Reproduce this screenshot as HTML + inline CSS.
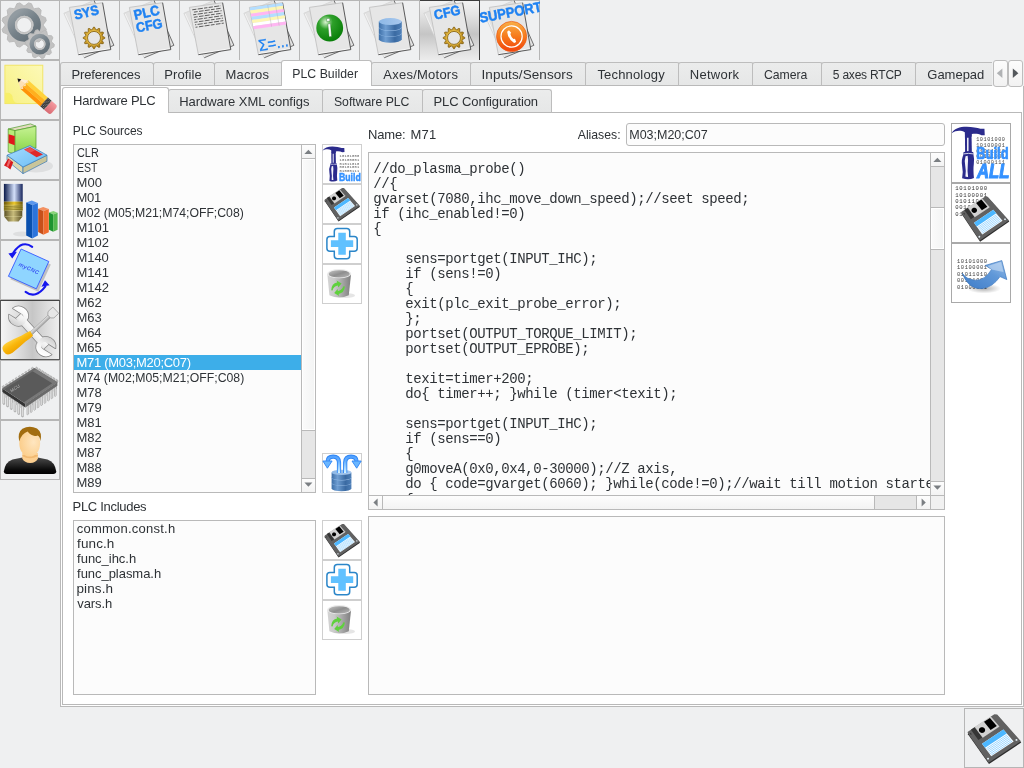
<!DOCTYPE html><html><head><meta charset="utf-8"><title>myCNC</title><style>

html,body{margin:0;padding:0}
body{width:1024px;height:768px;overflow:hidden;background:#eff0f1;position:relative;font-family:"Liberation Sans",sans-serif;color:#2e3236}
div,svg{position:absolute;box-sizing:border-box}
.ic{overflow:hidden}
.t{white-space:pre;font-family:"Liberation Sans",sans-serif;color:#2e3236}
.m{font-family:"Liberation Mono",monospace}
.tb{top:0;width:60px;height:60px;border-top:1px solid #b6b6b6;border-right:1px solid #b6b6b6}
.sb{left:0;width:60px;height:60px;border:1px solid #b6b6b6}
.sel-v{background:linear-gradient(to bottom,#f3f3f3 0%,#e2e2e2 25%,#c5c5c5 56%,#dcdcdc 80%,#ececec 100%);border-top-color:#3c3c3c;border-right-color:#3c3c3c}
.sel-h{background:linear-gradient(to right,#f5f5f5 0%,#e2e2e2 25%,#c6c6c6 54%,#dddddd 80%,#eeeeee 100%);border-color:#5a5a5a;border-top-color:#444}
.tab{background:linear-gradient(#ebecec,#e6e7e7);border:1px solid #bdbdbd;border-bottom:none;border-radius:3px 3px 0 0}
.tabsel{background:#fff;border:1px solid #bdbdbd;border-bottom:none;border-radius:3px 3px 0 0}
.pane{background:#fff;border:1px solid #b9b9b9}
.box{background:#fcfcfc;border:1px solid #b9b9b9}
.btn40{width:40px;height:40px;background:#fff;border:1px solid #cfcfcf}
.btn60{width:60px;height:60px;background:#fff;border:1px solid #a9a9a9}
.sbbtn{background:linear-gradient(#fdfdfd,#f3f3f3)}

</style></head><body><div id="root" style="left:0;top:0;width:1024px;height:768px;will-change:transform">
<svg width="0" height="0" style="position:absolute">
<defs>
 <linearGradient id="goldg" x1="0" y1="0" x2="1" y2="1"><stop offset="0" stop-color="#e0b23a"/><stop offset="1" stop-color="#ae7e16"/></linearGradient>
 <clipPath id="docclip"><polygon points="9.4,7.4 42.6,2.7 50.8,49.6 18.4,54.7"/></clipPath>
 <linearGradient id="trashg" x1="0" y1="0" x2="1" y2="0"><stop offset="0" stop-color="#d4d4d4"/><stop offset="0.3" stop-color="#cacaca"/><stop offset="1" stop-color="#7e7e7e"/></linearGradient>
 <linearGradient id="trashin" x1="0" y1="0" x2="1" y2="1"><stop offset="0" stop-color="#c4c4c4"/><stop offset="0.5" stop-color="#8e8e8e"/><stop offset="1" stop-color="#b8b8b8"/></linearGradient>
 <linearGradient id="dbside" x1="0" y1="0" x2="1" y2="0"><stop offset="0" stop-color="#3d6fa8"/><stop offset="0.3" stop-color="#6f9ed2"/><stop offset="0.7" stop-color="#3a6aa2"/><stop offset="1" stop-color="#4f80b8"/></linearGradient>
 <linearGradient id="dbtop" x1="0" y1="0" x2="1" y2="0"><stop offset="0" stop-color="#8db8e6"/><stop offset="1" stop-color="#a8c8ee"/></linearGradient>
 <linearGradient id="arrg" gradientUnits="userSpaceOnUse" x1="0" y1="2" x2="0" y2="20"><stop offset="0" stop-color="#4a9cff"/><stop offset="0.35" stop-color="#66b0ff"/><stop offset="1" stop-color="#d6f4ff"/></linearGradient>
 <linearGradient id="gearring" x1="0.15" y1="0.1" x2="0.85" y2="0.9"><stop offset="0" stop-color="#929ba1"/><stop offset="0.5" stop-color="#76828a"/><stop offset="1" stop-color="#66727a"/></linearGradient>
 <linearGradient id="noteg" x1="0" y1="1" x2="1" y2="0"><stop offset="0" stop-color="#f8f186"/><stop offset="0.5" stop-color="#faf59c"/><stop offset="1" stop-color="#fcf9b8"/></linearGradient>
 <linearGradient id="eraserg" x1="0" y1="0" x2="0" y2="1"><stop offset="0" stop-color="#f49aa0"/><stop offset="1" stop-color="#d86a72"/></linearGradient>
 <linearGradient id="greenbk" x1="0" y1="0" x2="0" y2="1"><stop offset="0" stop-color="#c6f294"/><stop offset="0.5" stop-color="#a6e46a"/><stop offset="1" stop-color="#86d048"/></linearGradient>
 <linearGradient id="bluebk" x1="0" y1="0" x2="1" y2="1"><stop offset="0" stop-color="#a8dcff"/><stop offset="1" stop-color="#68bcf4"/></linearGradient>
 <linearGradient id="toolblue" x1="0" y1="0" x2="1" y2="0"><stop offset="0" stop-color="#081848"/><stop offset="0.55" stop-color="#d4e0fa"/><stop offset="1" stop-color="#16245c"/></linearGradient>
 <linearGradient id="toolgold" x1="0" y1="0" x2="1" y2="0"><stop offset="0" stop-color="#6a5608"/><stop offset="0.55" stop-color="#ecc82c"/><stop offset="1" stop-color="#6a5608"/></linearGradient>
 <linearGradient id="toolgold2" x1="0" y1="0" x2="1" y2="0"><stop offset="0" stop-color="#8a7a20"/><stop offset="0.5" stop-color="#e8d468"/><stop offset="1" stop-color="#8a7a20"/></linearGradient>
 <linearGradient id="toolgold3" x1="0" y1="0" x2="1" y2="0"><stop offset="0" stop-color="#5c5226"/><stop offset="0.5" stop-color="#c8bc7c"/><stop offset="1" stop-color="#5c5226"/></linearGradient>
 <linearGradient id="wrenchg" gradientUnits="userSpaceOnUse" x1="0" y1="-9" x2="0" y2="9"><stop offset="0" stop-color="#ffffff"/><stop offset="0.5" stop-color="#f2f2f2"/><stop offset="1" stop-color="#d2d2d2"/></linearGradient>
 <linearGradient id="shaftg" x1="0" y1="0" x2="0" y2="1"><stop offset="0" stop-color="#e8e8e8"/><stop offset="1" stop-color="#a0a0a0"/></linearGradient>
 <linearGradient id="handleg" x1="0" y1="0" x2="0" y2="1"><stop offset="0" stop-color="#ffcf3a"/><stop offset="0.5" stop-color="#f9b60a"/><stop offset="1" stop-color="#f0a400"/></linearGradient>
 <linearGradient id="bodyg" x1="0" y1="0" x2="0" y2="1"><stop offset="0" stop-color="#4a4a4a"/><stop offset="0.75" stop-color="#0a0a0a"/><stop offset="1" stop-color="#000"/></linearGradient>
 <radialGradient id="faceg" cx="0.68" cy="0.45" r="0.7"><stop offset="0" stop-color="#ffe6c0"/><stop offset="1" stop-color="#fbcd8a"/></radialGradient>
 <radialGradient id="greeng" cx="0.35" cy="0.28" r="0.75"><stop offset="0" stop-color="#d8f4d0"/><stop offset="0.35" stop-color="#2ea02a"/><stop offset="1" stop-color="#087e08"/></radialGradient>
 <linearGradient id="orangeg" x1="0" y1="0" x2="0" y2="1"><stop offset="0" stop-color="#f8b048"/><stop offset="0.5" stop-color="#f67a1c"/><stop offset="1" stop-color="#f2420c"/></linearGradient>
 <linearGradient id="bigarr" x1="0" y1="1" x2="1" y2="0"><stop offset="0" stop-color="#3e7cc8"/><stop offset="0.6" stop-color="#6098d8"/><stop offset="1" stop-color="#9cc0ea"/></linearGradient>
 <radialGradient id="shadowg" cx="0.5" cy="0.5" r="0.5"><stop offset="0" stop-color="#000" stop-opacity="0.32"/><stop offset="1" stop-color="#000" stop-opacity="0"/></radialGradient>
</defs>
<symbol id="i-gears" viewBox="0 0 60 60">
  <path d="M24.87 5.71 L28.49 2.91 L31.45 3.70 L33.20 7.93 L34.43 8.63 L38.96 8.02 L41.13 10.18 L40.53 14.71 L41.24 15.94 L45.47 17.67 L46.27 20.63 L43.49 24.26 L43.49 25.67 L46.29 29.29 L45.50 32.25 L41.27 34.00 L40.57 35.23 L41.18 39.76 L39.02 41.93 L34.49 41.33 L33.26 42.04 L31.53 46.27 L28.57 47.07 L24.94 44.29 L23.53 44.29 L19.91 47.09 L16.95 46.30 L15.20 42.07 L13.97 41.37 L9.44 41.98 L7.27 39.82 L7.87 35.29 L7.16 34.06 L2.93 32.33 L2.13 29.37 L4.91 25.74 L4.91 24.33 L2.11 20.71 L2.90 17.75 L7.13 16.00 L7.83 14.77 L7.22 10.24 L9.38 8.07 L13.91 8.67 L15.14 7.96 L16.87 3.73 L19.83 2.93 L23.46 5.71Z M16.60 25.00 a7.60 7.60 0 1 0 15.20 0 a7.60 7.60 0 1 0 -15.20 0Z" fill="#c2c2c2" fill-rule="evenodd" stroke="#b8b8b8" stroke-width="0.9" stroke-linejoin="round"/>
  <circle cx="24.2" cy="25" r="13" fill="none" stroke="url(#gearring)" stroke-width="7.4"/>
  <circle cx="24.2" cy="25" r="8.5" fill="none" stroke="#c6c6c6" stroke-width="1.6"/>
  <path d="M51.63 42.07 L54.30 44.37 L54.06 46.72 L50.99 48.44 L50.56 49.41 L51.37 52.84 L49.80 54.60 L46.30 54.19 L45.39 54.72 L44.03 57.97 L41.72 58.47 L39.13 56.08 L38.08 55.98 L35.07 57.81 L32.90 56.85 L32.21 53.40 L31.43 52.70 L27.92 52.41 L26.72 50.36 L28.20 47.16 L27.97 46.13 L25.30 43.83 L25.54 41.48 L28.61 39.76 L29.04 38.79 L28.23 35.36 L29.80 33.60 L33.30 34.01 L34.21 33.48 L35.57 30.23 L37.88 29.73 L40.47 32.12 L41.52 32.22 L44.53 30.39 L46.70 31.35 L47.39 34.80 L48.17 35.50 L51.68 35.79 L52.88 37.84 L51.40 41.04Z" fill="#eff0f1" stroke="#b4b4b4" stroke-width="1.2" opacity="0.0"/>
  <path d="M51.63 42.07 L54.30 44.37 L54.06 46.72 L50.99 48.44 L50.56 49.41 L51.37 52.84 L49.80 54.60 L46.30 54.19 L45.39 54.72 L44.03 57.97 L41.72 58.47 L39.13 56.08 L38.08 55.98 L35.07 57.81 L32.90 56.85 L32.21 53.40 L31.43 52.70 L27.92 52.41 L26.72 50.36 L28.20 47.16 L27.97 46.13 L25.30 43.83 L25.54 41.48 L28.61 39.76 L29.04 38.79 L28.23 35.36 L29.80 33.60 L33.30 34.01 L34.21 33.48 L35.57 30.23 L37.88 29.73 L40.47 32.12 L41.52 32.22 L44.53 30.39 L46.70 31.35 L47.39 34.80 L48.17 35.50 L51.68 35.79 L52.88 37.84 L51.40 41.04Z M35.20 44.10 a4.60 4.60 0 1 0 9.20 0 a4.60 4.60 0 1 0 -9.20 0Z" fill="#c2c2c2" fill-rule="evenodd" stroke="#b8b8b8" stroke-width="0.9" stroke-linejoin="round"/>
  <circle cx="39.8" cy="44.1" r="8.0" fill="none" stroke="url(#gearring)" stroke-width="4.6"/>
  <circle cx="39.8" cy="44.1" r="5.2" fill="none" stroke="#c6c6c6" stroke-width="1.1"/>
</symbol>
<symbol id="i-sys" viewBox="0 0 60 60">
  <polygon points="3.9,13.3 34,0.4 53.9,45.3 24.2,57.8" fill="#e2e2e2"/>
  <polyline points="24.2,57.8 3.9,13.3 34,0.4" fill="none" stroke="#d2d2d2" stroke-width="0.8"/><polyline points="24.6,56.6 5.2,13.9" fill="none" stroke="#f6f6f6" stroke-width="0.8"/>
  <polyline points="34,0.4 53.9,45.3 24.2,57.8" fill="none" stroke="#5a5a5a" stroke-width="0.85"/>
  <polygon points="9.4,7.4 42.6,2.7 50.8,49.6 18.4,54.7" fill="#e6e6e6"/>
  <polyline points="18.9,53.6 49.6,48.8" fill="none" stroke="#fafafa" stroke-width="0.9"/>
  <polyline points="18.4,54.7 9.4,7.4 42.6,2.7" fill="none" stroke="#c2c2c2" stroke-width="0.9"/>
  <polyline points="42.6,2.7 50.8,49.6 18.4,54.7" fill="none" stroke="#4a4a4a" stroke-width="0.9"/>
<text x="0" y="0" transform="translate(15.20 19.80) rotate(-13) scale(1 1.09)" font-family="Liberation Sans, sans-serif" font-weight="bold" font-size="12.6" fill="#1f82f2" stroke="#1f82f2" stroke-width="0.45" >SYS</text>
  <path d="M32.30 29.47 L33.55 27.11 L34.45 27.11 L35.70 29.47 L36.74 29.75 L39.00 28.33 L39.79 28.78 L39.69 31.45 L40.45 32.21 L43.12 32.11 L43.57 32.90 L42.15 35.16 L42.43 36.20 L44.79 37.45 L44.79 38.35 L42.43 39.60 L42.15 40.64 L43.57 42.90 L43.12 43.69 L40.45 43.59 L39.69 44.35 L39.79 47.02 L39.00 47.47 L36.74 46.05 L35.70 46.33 L34.45 48.69 L33.55 48.69 L32.30 46.33 L31.26 46.05 L29.00 47.47 L28.21 47.02 L28.31 44.35 L27.55 43.59 L24.88 43.69 L24.43 42.90 L25.85 40.64 L25.57 39.60 L23.21 38.35 L23.21 37.45 L25.57 36.20 L25.85 35.16 L24.43 32.90 L24.88 32.11 L27.55 32.21 L28.31 31.45 L28.21 28.78 L29.00 28.33 L31.26 29.75Z M27.50 37.90 a6.50 6.50 0 1 0 13.00 0 a6.50 6.50 0 1 0 -13.00 0Z" fill="url(#goldg)" fill-rule="evenodd" stroke="#7e5c0e" stroke-width="0.8" stroke-linejoin="round"/>
  <circle cx="34" cy="37.9" r="7.4" fill="none" stroke="#f0cc58" stroke-width="0.7" opacity="0.8"/>
</symbol>
<symbol id="i-plccfg" viewBox="0 0 60 60">
  <polygon points="3.9,13.3 34,0.4 53.9,45.3 24.2,57.8" fill="#e2e2e2"/>
  <polyline points="24.2,57.8 3.9,13.3 34,0.4" fill="none" stroke="#d2d2d2" stroke-width="0.8"/><polyline points="24.6,56.6 5.2,13.9" fill="none" stroke="#f6f6f6" stroke-width="0.8"/>
  <polyline points="34,0.4 53.9,45.3 24.2,57.8" fill="none" stroke="#5a5a5a" stroke-width="0.85"/>
  <polygon points="9.4,7.4 42.6,2.7 50.8,49.6 18.4,54.7" fill="#e6e6e6"/>
  <polyline points="18.9,53.6 49.6,48.8" fill="none" stroke="#fafafa" stroke-width="0.9"/>
  <polyline points="18.4,54.7 9.4,7.4 42.6,2.7" fill="none" stroke="#c2c2c2" stroke-width="0.9"/>
  <polyline points="42.6,2.7 50.8,49.6 18.4,54.7" fill="none" stroke="#4a4a4a" stroke-width="0.9"/>
<text x="0" y="0" transform="translate(15.10 20.10) rotate(-13) scale(1 1.09)" font-family="Liberation Sans, sans-serif" font-weight="bold" font-size="12.9" fill="#1f82f2" stroke="#1f82f2" stroke-width="0.45" >PLC</text><text x="0" y="0" transform="translate(17.10 32.60) rotate(-11) scale(1 1.09)" font-family="Liberation Sans, sans-serif" font-weight="bold" font-size="12.6" fill="#1f82f2" stroke="#1f82f2" stroke-width="0.45" >CFG</text></symbol>
<symbol id="i-text" viewBox="0 0 60 60">
  <polygon points="3.9,13.3 34,0.4 53.9,45.3 24.2,57.8" fill="#e2e2e2"/>
  <polyline points="24.2,57.8 3.9,13.3 34,0.4" fill="none" stroke="#d2d2d2" stroke-width="0.8"/><polyline points="24.6,56.6 5.2,13.9" fill="none" stroke="#f6f6f6" stroke-width="0.8"/>
  <polyline points="34,0.4 53.9,45.3 24.2,57.8" fill="none" stroke="#5a5a5a" stroke-width="0.85"/>
  <polygon points="9.4,7.4 42.6,2.7 50.8,49.6 18.4,54.7" fill="#e6e6e6"/>
  <polyline points="18.9,53.6 49.6,48.8" fill="none" stroke="#fafafa" stroke-width="0.9"/>
  <polyline points="18.4,54.7 9.4,7.4 42.6,2.7" fill="none" stroke="#c2c2c2" stroke-width="0.9"/>
  <polyline points="42.6,2.7 50.8,49.6 18.4,54.7" fill="none" stroke="#4a4a4a" stroke-width="0.9"/>
<line x1="12.24" y1="9.81" x2="40.75" y2="5.75" stroke="#3a3a3a" stroke-width="0.8" stroke-dasharray="4.2 1.3 5.2 1.2 3.4 1.3" stroke-dashoffset="0"/>
<line x1="12.71" y1="12.31" x2="41.19" y2="8.23" stroke="#3a3a3a" stroke-width="0.8" stroke-dasharray="5 1.2 3.8 1.4 4.6 1.2" stroke-dashoffset="5"/>
<line x1="13.19" y1="14.80" x2="41.63" y2="10.71" stroke="#3a3a3a" stroke-width="0.8" stroke-dasharray="4.2 1.3 5.2 1.2 3.4 1.3" stroke-dashoffset="1"/>
<line x1="13.66" y1="17.30" x2="42.06" y2="13.18" stroke="#3a3a3a" stroke-width="0.8" stroke-dasharray="5 1.2 3.8 1.4 4.6 1.2" stroke-dashoffset="6"/>
<line x1="14.13" y1="19.80" x2="42.50" y2="15.66" stroke="#3a3a3a" stroke-width="0.8" stroke-dasharray="4.2 1.3 5.2 1.2 3.4 1.3" stroke-dashoffset="2"/>
<line x1="14.60" y1="22.29" x2="42.93" y2="18.14" stroke="#3a3a3a" stroke-width="0.8" stroke-dasharray="5 1.2 3.8 1.4 4.6 1.2" stroke-dashoffset="7"/>
<line x1="15.08" y1="24.79" x2="43.37" y2="20.62" stroke="#3a3a3a" stroke-width="0.8" stroke-dasharray="4.2 1.3 5.2 1.2 3.4 1.3" stroke-dashoffset="3"/>
<line x1="15.55" y1="27.28" x2="43.81" y2="23.10" stroke="#3a3a3a" stroke-width="0.8" stroke-dasharray="5 1.2 3.8 1.4 4.6 1.2" stroke-dashoffset="8"/></symbol>
<symbol id="i-sum" viewBox="0 0 60 60">
  <polygon points="3.9,13.3 34,0.4 53.9,45.3 24.2,57.8" fill="#e2e2e2"/>
  <polyline points="24.2,57.8 3.9,13.3 34,0.4" fill="none" stroke="#d2d2d2" stroke-width="0.8"/><polyline points="24.6,56.6 5.2,13.9" fill="none" stroke="#f6f6f6" stroke-width="0.8"/>
  <polyline points="34,0.4 53.9,45.3 24.2,57.8" fill="none" stroke="#5a5a5a" stroke-width="0.85"/>
  <polygon points="9.4,7.4 42.6,2.7 50.8,49.6 18.4,54.7" fill="#e6e6e6"/>
  <polyline points="18.9,53.6 49.6,48.8" fill="none" stroke="#fafafa" stroke-width="0.9"/>
  <polyline points="18.4,54.7 9.4,7.4 42.6,2.7" fill="none" stroke="#c2c2c2" stroke-width="0.9"/>
  <polyline points="42.6,2.7 50.8,49.6 18.4,54.7" fill="none" stroke="#4a4a4a" stroke-width="0.9"/>
<g clip-path="url(#docclip)">
<polygon points="9.40,7.40 42.60,2.70 43.15,5.82 10.00,10.55" fill="#b4deff"/>
<polygon points="10.00,10.55 43.15,5.82 43.69,8.94 10.60,13.69" fill="#fdf6b4"/>
<polygon points="10.60,13.69 43.69,8.94 44.24,12.06 11.20,16.84" fill="#ffb6f2"/>
<polygon points="11.20,16.84 44.24,12.06 44.78,15.18 11.79,19.98" fill="#b4deff"/>
<polygon points="11.79,19.98 44.78,15.18 45.33,18.29 12.39,23.13" fill="#fdf6b4"/>
<polygon points="12.39,23.13 45.33,18.29 45.87,21.41 12.99,26.27" fill="#ffffff"/>
<polygon points="12.99,26.27 45.87,21.41 46.42,24.53 13.59,29.42" fill="#ffb6f2"/>
<line x1="27.66" y1="4.81" x2="31.64" y2="26.73" stroke="#a8a8a8" stroke-width="0.5" opacity="0.7"/>
<line x1="35.30" y1="3.73" x2="39.20" y2="25.61" stroke="#a8a8a8" stroke-width="0.5" opacity="0.7"/>
</g><text x="0" y="0" transform="translate(19.40 51.30) rotate(-10) scale(1 1.09)" font-family="Liberation Sans, sans-serif" font-weight="normal" font-size="14.8" fill="#1f82f2" stroke="#1f82f2" stroke-width="0.25" >&#931;=...</text></symbol>
<symbol id="i-info" viewBox="0 0 60 60">
  <polygon points="3.9,13.3 34,0.4 53.9,45.3 24.2,57.8" fill="#e2e2e2"/>
  <polyline points="24.2,57.8 3.9,13.3 34,0.4" fill="none" stroke="#d2d2d2" stroke-width="0.8"/><polyline points="24.6,56.6 5.2,13.9" fill="none" stroke="#f6f6f6" stroke-width="0.8"/>
  <polyline points="34,0.4 53.9,45.3 24.2,57.8" fill="none" stroke="#5a5a5a" stroke-width="0.85"/>
  <polygon points="9.4,7.4 42.6,2.7 50.8,49.6 18.4,54.7" fill="#e6e6e6"/>
  <polyline points="18.9,53.6 49.6,48.8" fill="none" stroke="#fafafa" stroke-width="0.9"/>
  <polyline points="18.4,54.7 9.4,7.4 42.6,2.7" fill="none" stroke="#c2c2c2" stroke-width="0.9"/>
  <polyline points="42.6,2.7 50.8,49.6 18.4,54.7" fill="none" stroke="#4a4a4a" stroke-width="0.9"/>

  <circle cx="29.7" cy="28" r="13.4" fill="url(#greeng)"/>
  <rect x="26.6" y="18.6" width="3.2" height="2.7" fill="#fff" stroke="#0a5a0a" stroke-width="0.3" transform="rotate(-8 28 20)"/>
  <path d="M27.9 24 L30.4 23.6 L31.6 36.4 L29.1 36.7Z" fill="#fff" stroke="#0a5a0a" stroke-width="0.3"/>
</symbol>
<symbol id="i-db" viewBox="0 0 60 60">
  <polygon points="3.9,13.3 34,0.4 53.9,45.3 24.2,57.8" fill="#e2e2e2"/>
  <polyline points="24.2,57.8 3.9,13.3 34,0.4" fill="none" stroke="#d2d2d2" stroke-width="0.8"/><polyline points="24.6,56.6 5.2,13.9" fill="none" stroke="#f6f6f6" stroke-width="0.8"/>
  <polyline points="34,0.4 53.9,45.3 24.2,57.8" fill="none" stroke="#5a5a5a" stroke-width="0.85"/>
  <polygon points="9.4,7.4 42.6,2.7 50.8,49.6 18.4,54.7" fill="#e6e6e6"/>
  <polyline points="18.9,53.6 49.6,48.8" fill="none" stroke="#fafafa" stroke-width="0.9"/>
  <polyline points="18.4,54.7 9.4,7.4 42.6,2.7" fill="none" stroke="#c2c2c2" stroke-width="0.9"/>
  <polyline points="42.6,2.7 50.8,49.6 18.4,54.7" fill="none" stroke="#4a4a4a" stroke-width="0.9"/>
<path d="M18.8 33.400000000000006 V39.300000000000004 A11.499999999999998 3.5 0 0 0 41.8 39.300000000000004 V33.400000000000006 Z" fill="url(#dbside)"/><ellipse cx="30.299999999999997" cy="33.400000000000006" rx="11.499999999999998" ry="3.5" fill="url(#dbtop)"/>
<path d="M18.8 27.5 V33.0 A11.499999999999998 3.5 0 0 0 41.8 33.0 V27.5 Z" fill="url(#dbside)"/><ellipse cx="30.299999999999997" cy="27.5" rx="11.499999999999998" ry="3.5" fill="url(#dbtop)"/>
<path d="M18.8 21.6 V27.1 A11.499999999999998 3.5 0 0 0 41.8 27.1 V21.6 Z" fill="url(#dbside)"/><ellipse cx="30.299999999999997" cy="21.6" rx="11.499999999999998" ry="3.5" fill="url(#dbtop)"/></symbol>
<symbol id="i-cfg" viewBox="0 0 60 60">
  <polygon points="3.9,13.3 34,0.4 53.9,45.3 24.2,57.8" fill="#e2e2e2"/>
  <polyline points="24.2,57.8 3.9,13.3 34,0.4" fill="none" stroke="#d2d2d2" stroke-width="0.8"/><polyline points="24.6,56.6 5.2,13.9" fill="none" stroke="#f6f6f6" stroke-width="0.8"/>
  <polyline points="34,0.4 53.9,45.3 24.2,57.8" fill="none" stroke="#5a5a5a" stroke-width="0.85"/>
  <polygon points="9.4,7.4 42.6,2.7 50.8,49.6 18.4,54.7" fill="#e6e6e6"/>
  <polyline points="18.9,53.6 49.6,48.8" fill="none" stroke="#fafafa" stroke-width="0.9"/>
  <polyline points="18.4,54.7 9.4,7.4 42.6,2.7" fill="none" stroke="#c2c2c2" stroke-width="0.9"/>
  <polyline points="42.6,2.7 50.8,49.6 18.4,54.7" fill="none" stroke="#4a4a4a" stroke-width="0.9"/>
<text x="0" y="0" transform="translate(15.10 19.80) rotate(-12) scale(1 1.09)" font-family="Liberation Sans, sans-serif" font-weight="bold" font-size="12.6" fill="#1f82f2" stroke="#1f82f2" stroke-width="0.45" >CFG</text>
  <path d="M32.30 29.47 L33.55 27.11 L34.45 27.11 L35.70 29.47 L36.74 29.75 L39.00 28.33 L39.79 28.78 L39.69 31.45 L40.45 32.21 L43.12 32.11 L43.57 32.90 L42.15 35.16 L42.43 36.20 L44.79 37.45 L44.79 38.35 L42.43 39.60 L42.15 40.64 L43.57 42.90 L43.12 43.69 L40.45 43.59 L39.69 44.35 L39.79 47.02 L39.00 47.47 L36.74 46.05 L35.70 46.33 L34.45 48.69 L33.55 48.69 L32.30 46.33 L31.26 46.05 L29.00 47.47 L28.21 47.02 L28.31 44.35 L27.55 43.59 L24.88 43.69 L24.43 42.90 L25.85 40.64 L25.57 39.60 L23.21 38.35 L23.21 37.45 L25.57 36.20 L25.85 35.16 L24.43 32.90 L24.88 32.11 L27.55 32.21 L28.31 31.45 L28.21 28.78 L29.00 28.33 L31.26 29.75Z M27.50 37.90 a6.50 6.50 0 1 0 13.00 0 a6.50 6.50 0 1 0 -13.00 0Z" fill="url(#goldg)" fill-rule="evenodd" stroke="#7e5c0e" stroke-width="0.8" stroke-linejoin="round"/>
  <circle cx="34" cy="37.9" r="7.4" fill="none" stroke="#f0cc58" stroke-width="0.7" opacity="0.8"/>
</symbol>
<symbol id="i-support" viewBox="0 0 60 60">
  <polygon points="3.9,13.3 34,0.4 53.9,45.3 24.2,57.8" fill="#e2e2e2"/>
  <polyline points="24.2,57.8 3.9,13.3 34,0.4" fill="none" stroke="#d2d2d2" stroke-width="0.8"/><polyline points="24.6,56.6 5.2,13.9" fill="none" stroke="#f6f6f6" stroke-width="0.8"/>
  <polyline points="34,0.4 53.9,45.3 24.2,57.8" fill="none" stroke="#5a5a5a" stroke-width="0.85"/>
  <polygon points="9.4,7.4 42.6,2.7 50.8,49.6 18.4,54.7" fill="#e6e6e6"/>
  <polyline points="18.9,53.6 49.6,48.8" fill="none" stroke="#fafafa" stroke-width="0.9"/>
  <polyline points="18.4,54.7 9.4,7.4 42.6,2.7" fill="none" stroke="#c2c2c2" stroke-width="0.9"/>
  <polyline points="42.6,2.7 50.8,49.6 18.4,54.7" fill="none" stroke="#4a4a4a" stroke-width="0.9"/>
<text x="0" y="0" transform="translate(0.60 22.80) rotate(-10.6) scale(1 1.09)" font-family="Liberation Sans, sans-serif" font-weight="bold" font-size="13.0" fill="#1f82f2" stroke="#1f82f2" stroke-width="0.45" >SUPPORT</text>
  <circle cx="31.6" cy="36.5" r="15.1" fill="url(#orangeg)" stroke="#ee5a12" stroke-width="0.7"/>
  <circle cx="31.6" cy="36.5" r="10.6" fill="none" stroke="#fff" stroke-width="1.2"/>
  <g transform="translate(31.8 36.6) rotate(-32)">
   <path d="M-1.4 -6.6 L0.9 -6.8 L1.5 -3.6 L0.1 -2.9 Q-0.9 0 0.1 2.9 L1.5 3.6 L0.9 6.8 L-1.4 6.6 Q-4.6 0 -1.4 -6.6Z" fill="#fff"/>
  </g>
</symbol>
<symbol id="i-note" viewBox="0 0 60 60">
  <rect x="4.9" y="5.2" width="37.9" height="38.4" fill="url(#noteg)" stroke="#f2e45e" stroke-width="0.9"/>
  <path d="M5.4 33 Q12.5 32 12.8 38.5 Q13.5 42 17 43.1 H5.4Z" fill="#f6ee5e" opacity="0.75"/>
  <g transform="translate(17.4 18.6) rotate(41.2) scale(0.99 1.19)">
   <path d="M0 0 L9.6 -4.9 V4.9Z" fill="#fde0b4"/>
   <path d="M0 0 L9.6 -4.9 V-1.6Z" fill="#fff0d8"/>
   <path d="M0 0 L3.4 -1.75 V1.75Z" fill="#1a1a1a"/>
   <rect x="9.4" y="-4.9" width="26.6" height="3.3" fill="#ffd23c"/>
   <rect x="9.4" y="-1.6" width="26.6" height="3.3" fill="#ffb01e"/>
   <rect x="9.4" y="1.7" width="26.6" height="3.2" fill="#ff9208"/>
   <path d="M9.4 -4.9 L11.3 -3.3 L9.4 -1.6 L11.3 0 L9.4 1.7 L11.3 3.3 L9.4 4.9Z" fill="#fde0b4"/>
   <rect x="35.8" y="-4.9" width="5.2" height="9.8" fill="#333"/>
   <g stroke="#d0d0d0" stroke-width="0.55" stroke-dasharray="0.8 0.8">
    <line x1="36.3" y1="-4.9" x2="36.3" y2="4.9"/><line x1="37.7" y1="-4.1" x2="37.7" y2="4.9"/>
    <line x1="39.1" y1="-4.9" x2="39.1" y2="4.9"/><line x1="40.4" y1="-4.1" x2="40.4" y2="4.9"/>
   </g>
   <path d="M41 -4.9 H46.5 Q49 -4.9 49 -2.4 V2.4 Q49 4.9 46.5 4.9 H41Z" fill="url(#eraserg)"/>
  </g>
</symbol>
<symbol id="i-books" viewBox="0 0 60 60">
  <ellipse cx="36" cy="46" rx="17" ry="6.5" fill="#000" opacity="0.07"/>
  <polygon points="8.2,9 30.5,3.9 36,6.2 15,10.6" fill="#e3dcc0" stroke="#4e9a2a" stroke-width="0.7"/>
  <polygon points="8.2,9 15,10.6 15,34 8.2,32" fill="#b8ec78" stroke="#4e9a2a" stroke-width="0.7"/>
  <polygon points="15,10.6 36,6.2 36,28 15,34" fill="url(#greenbk)" stroke="#4e9a2a" stroke-width="0.7"/>
  <polygon points="8.6,14.2 14.7,16 14.7,25.2 8.6,23" fill="#e0181c"/>
  <polygon points="7,35.2 23,47 23,53.6 7,40.5" fill="#ddd8b0" stroke="#3a78b4" stroke-width="0.7"/>
  <polygon points="23,47 47,35.2 47,41.2 23,53.6" fill="#c9c59a" stroke="#3a78b4" stroke-width="0.7"/>
  <polygon points="7,35.2 30,25.6 47,35.2 23,47" fill="url(#bluebk)" stroke="#3a78b4" stroke-width="0.7"/>
  <polygon points="24,29.6 30,27.1 43,34.6 36.6,37.2" fill="#e0282a"/>
  <polygon points="24.6,29.7 30,27.5 35,30.4 29.5,32.7" fill="#f06a6a" opacity="0.6"/>
  <polygon points="8.2,38.6 13.2,42.2 10.4,49.4 7.6,47.2 4,45.6" fill="#d81a1e"/>
  <polygon points="8.8,39.6 10.8,41 8.2,47 6.6,46" fill="#f48a8a" opacity="0.7"/>
</symbol>
<symbol id="i-toolbars" viewBox="0 0 60 60">
  <ellipse cx="22" cy="54" rx="9" ry="2.6" fill="#000" opacity="0.07"/>
  <rect x="3.9" y="3.9" width="18.8" height="17.8" fill="url(#toolblue)"/>
  <rect x="3.9" y="21.6" width="18.8" height="3.3" fill="url(#toolgold)"/>
  <rect x="3.9" y="24.9" width="18.8" height="5.8" fill="url(#toolgold2)"/>
  <g stroke="#6a5a10" stroke-width="0.7" opacity="0.8"><line x1="3.9" y1="26.6" x2="22.7" y2="25.9"/><line x1="3.9" y1="28.3" x2="22.7" y2="27.6"/><line x1="3.9" y1="30" x2="22.7" y2="29.3"/></g>
  <path d="M4.3 30.7 H22.3 V36.8 L18.6 41.4 H8.2 L4.3 36.8Z" fill="url(#toolgold3)"/>
  <line x1="4.3" y1="36.6" x2="22.3" y2="36.6" stroke="#e8e0a8" stroke-width="0.6" opacity="0.7"/>
  <polygon points="26.2,22.6 31.8,20.6 37.9,23 32.2,25" fill="#5a96ec"/>
  <polygon points="26.2,22.6 32.2,25 32.2,58.6 26.2,55.6" fill="#0a50ae"/>
  <polygon points="32.2,25 37.9,23 37.9,55.6 32.2,58.6" fill="#2c74dc"/>
  <polygon points="38.2,28.8 43.2,27 48.8,29 43.4,31" fill="#f49060"/>
  <polygon points="38.2,28.8 43.4,31 43.4,54.8 38.2,52" fill="#c8501a"/>
  <polygon points="43.4,31 48.8,29 48.8,52.2 43.4,54.8" fill="#f06c2e"/>
  <polygon points="49,32.6 53.4,31 57.6,32.8 53.2,34.4" fill="#8ad47a"/>
  <polygon points="49,32.6 53.2,34.4 53.2,51.8 49,49.8" fill="#1e9430"/>
  <polygon points="53.2,34.4 57.6,32.8 57.6,49.8 53.2,51.8" fill="#54b84e"/>
</symbol>
<symbol id="i-mycnc" viewBox="0 0 60 60">
  <polygon points="23.1,12 50.8,24.5 38.3,51.8 10.4,39.3" fill="#b0b0b0" opacity="0.75"/>
  <polygon points="21.1,9 48.8,21.5 36.3,48.8 8.4,36.3" fill="#8fd5ff" stroke="#3558ff" stroke-width="0.9"/>
  <text x="0" y="0" transform="translate(28.2 30.2) rotate(24)" text-anchor="middle" font-family="Liberation Sans, sans-serif" font-weight="bold" font-style="italic" font-size="5.6" fill="#3a58f4" letter-spacing="0.35">myCNC</text>
  <path d="M32.2 6.9 Q22.5 -0.6 13.4 12.6" fill="none" stroke="#1616ee" stroke-width="2.1" stroke-linecap="round"/>
  <polygon points="8.4,13.4 16.9,11.8 12.3,18.6" fill="#1616ee"/>
  <path d="M25.6 51.8 Q35.5 59.4 45.4 46.4" fill="none" stroke="#1616ee" stroke-width="2.1" stroke-linecap="round"/>
  <polygon points="41.4,46.8 49.6,45.2 45.0,40.2" fill="#1616ee"/>
</symbol>
<symbol id="i-tools" viewBox="0 0 60 60">
  <g transform="translate(32.2 31.4) rotate(48)">
   <g fill="none" stroke="#868686" stroke-width="1.5" stroke-linejoin="round"><rect x="-20.50" y="-3.50" width="41.00" height="7.00"/><path d="M9.05 -3.50 A9.7 9.7 0 0 0 -8.97 -3.70 L1.20 -3.70 A3.7 3.7 0 0 1 1.20 3.70 L-8.97 3.70 A9.7 9.7 0 0 0 9.05 3.50 Z" transform="translate(-20.50 0) rotate(-16)"/><path d="M9.05 -3.50 A9.7 9.7 0 0 0 -8.97 -3.70 L1.20 -3.70 A3.7 3.7 0 0 1 1.20 3.70 L-8.97 3.70 A9.7 9.7 0 0 0 9.05 3.50 Z" transform="translate(20.50 0) rotate(164)"/></g>
   <g fill="url(#wrenchg)" stroke="none"><rect x="-20.50" y="-3.50" width="41.00" height="7.00"/><path d="M9.05 -3.50 A9.7 9.7 0 0 0 -8.97 -3.70 L1.20 -3.70 A3.7 3.7 0 0 1 1.20 3.70 L-8.97 3.70 A9.7 9.7 0 0 0 9.05 3.50 Z" transform="translate(-20.50 0) rotate(-16)"/><path d="M9.05 -3.50 A9.7 9.7 0 0 0 -8.97 -3.70 L1.20 -3.70 A3.7 3.7 0 0 1 1.20 3.70 L-8.97 3.70 A9.7 9.7 0 0 0 9.05 3.50 Z" transform="translate(20.50 0) rotate(164)"/></g>
  </g>
  <g transform="translate(30.9 33.6) rotate(-43.2)">
   <rect x="0" y="-1.7" width="26.5" height="3.4" fill="url(#shaftg)" stroke="#8a8a8a" stroke-width="0.5"/>
   <path d="M25 -2.0 L27.5 -4.3 H34.2 V4.3 H27.5 L25 2.0Z" fill="#e6e6e6" stroke="#8a8a8a" stroke-width="0.6"/>
  </g>
  <g transform="translate(3.3 51.2) rotate(-32.6)">
   <path d="M0 0.4 Q0 -5.6 7 -5.4 Q15 -4.8 24 -3.3 Q29 -3.2 33.4 -2.5 V2.9 Q29 3.6 24 3.9 Q15 5.6 7 6.2 Q0 6.4 0 0.4Z" fill="url(#handleg)"/>
  </g>
</symbol>
<symbol id="i-chip" viewBox="0 0 60 60">
  <path d="M2.88 32.73 l2.3 1.5 v3.2 l-0.5 0.6 v6.2 l-1.3 0.2 l-0.5 -0.9z" fill="#cbcbcb" stroke="#8c8c8c" stroke-width="0.5"/>
<path d="M3.68 34.13 v9.2" stroke="#f4f4f4" stroke-width="0.6" fill="none"/>
<path d="M6.60 35.25 l2.3 1.5 v3.2 l-0.5 0.6 v6.2 l-1.3 0.2 l-0.5 -0.9z" fill="#cbcbcb" stroke="#8c8c8c" stroke-width="0.5"/>
<path d="M7.40 36.65 v9.2" stroke="#f4f4f4" stroke-width="0.6" fill="none"/>
<path d="M10.33 37.76 l2.3 1.5 v3.2 l-0.5 0.6 v6.2 l-1.3 0.2 l-0.5 -0.9z" fill="#cbcbcb" stroke="#8c8c8c" stroke-width="0.5"/>
<path d="M11.13 39.16 v9.2" stroke="#f4f4f4" stroke-width="0.6" fill="none"/>
<path d="M14.05 40.28 l2.3 1.5 v3.2 l-0.5 0.6 v6.2 l-1.3 0.2 l-0.5 -0.9z" fill="#cbcbcb" stroke="#8c8c8c" stroke-width="0.5"/>
<path d="M14.85 41.68 v9.2" stroke="#f4f4f4" stroke-width="0.6" fill="none"/>
<path d="M17.78 42.80 l2.3 1.5 v3.2 l-0.5 0.6 v6.2 l-1.3 0.2 l-0.5 -0.9z" fill="#cbcbcb" stroke="#8c8c8c" stroke-width="0.5"/>
<path d="M18.58 44.20 v9.2" stroke="#f4f4f4" stroke-width="0.6" fill="none"/>
<path d="M21.51 45.31 l2.3 1.5 v3.2 l-0.5 0.6 v6.2 l-1.3 0.2 l-0.5 -0.9z" fill="#cbcbcb" stroke="#8c8c8c" stroke-width="0.5"/>
<path d="M22.31 46.71 v9.2" stroke="#f4f4f4" stroke-width="0.6" fill="none"/>
<path d="M26.98 45.27 l2.0 -1.35 v3.4 l-0.3 0.7 v6.0 l-1.3 0.9 l-0.4 -0.6z" fill="#c6c6c6" stroke="#8c8c8c" stroke-width="0.5"/>
<path d="M27.78 45.87 v8.6" stroke="#f0f0f0" stroke-width="0.55" fill="none"/>
<path d="M30.42 42.97 l2.0 -1.35 v3.4 l-0.3 0.7 v6.0 l-1.3 0.9 l-0.4 -0.6z" fill="#c6c6c6" stroke="#8c8c8c" stroke-width="0.5"/>
<path d="M31.22 43.57 v8.6" stroke="#f0f0f0" stroke-width="0.55" fill="none"/>
<path d="M33.86 40.67 l2.0 -1.35 v3.4 l-0.3 0.7 v6.0 l-1.3 0.9 l-0.4 -0.6z" fill="#c6c6c6" stroke="#8c8c8c" stroke-width="0.5"/>
<path d="M34.66 41.27 v8.6" stroke="#f0f0f0" stroke-width="0.55" fill="none"/>
<path d="M37.30 38.37 l2.0 -1.35 v3.4 l-0.3 0.7 v6.0 l-1.3 0.9 l-0.4 -0.6z" fill="#c6c6c6" stroke="#8c8c8c" stroke-width="0.5"/>
<path d="M38.10 38.97 v8.6" stroke="#f0f0f0" stroke-width="0.55" fill="none"/>
<path d="M40.74 36.07 l2.0 -1.35 v3.4 l-0.3 0.7 v6.0 l-1.3 0.9 l-0.4 -0.6z" fill="#c6c6c6" stroke="#8c8c8c" stroke-width="0.5"/>
<path d="M41.54 36.67 v8.6" stroke="#f0f0f0" stroke-width="0.55" fill="none"/>
<path d="M44.18 33.77 l2.0 -1.35 v3.4 l-0.3 0.7 v6.0 l-1.3 0.9 l-0.4 -0.6z" fill="#c6c6c6" stroke="#8c8c8c" stroke-width="0.5"/>
<path d="M44.98 34.37 v8.6" stroke="#f0f0f0" stroke-width="0.55" fill="none"/>
<path d="M47.63 31.47 l2.0 -1.35 v3.4 l-0.3 0.7 v6.0 l-1.3 0.9 l-0.4 -0.6z" fill="#c6c6c6" stroke="#8c8c8c" stroke-width="0.5"/>
<path d="M48.43 32.07 v8.6" stroke="#f0f0f0" stroke-width="0.55" fill="none"/>
<path d="M51.07 29.17 l2.0 -1.35 v3.4 l-0.3 0.7 v6.0 l-1.3 0.9 l-0.4 -0.6z" fill="#c6c6c6" stroke="#8c8c8c" stroke-width="0.5"/>
<path d="M51.87 29.77 v8.6" stroke="#f0f0f0" stroke-width="0.55" fill="none"/>
<path d="M54.51 26.87 l2.0 -1.35 v3.4 l-0.3 0.7 v6.0 l-1.3 0.9 l-0.4 -0.6z" fill="#c6c6c6" stroke="#8c8c8c" stroke-width="0.5"/>
<path d="M55.31 27.47 v8.6" stroke="#f0f0f0" stroke-width="0.55" fill="none"/>
<path d="M2.21 26.48 l1.5 -0.95 l1.0 0.65 v1.7 l-1.5 0.95z" fill="#c2c2c2" stroke="#8e8e8e" stroke-width="0.45"/>
<path d="M5.42 24.45 l1.5 -0.95 l1.0 0.65 v1.7 l-1.5 0.95z" fill="#c2c2c2" stroke="#8e8e8e" stroke-width="0.45"/>
<path d="M8.62 22.43 l1.5 -0.95 l1.0 0.65 v1.7 l-1.5 0.95z" fill="#c2c2c2" stroke="#8e8e8e" stroke-width="0.45"/>
<path d="M11.84 20.39 l1.5 -0.95 l1.0 0.65 v1.7 l-1.5 0.95z" fill="#c2c2c2" stroke="#8e8e8e" stroke-width="0.45"/>
<path d="M15.05 18.37 l1.5 -0.95 l1.0 0.65 v1.7 l-1.5 0.95z" fill="#c2c2c2" stroke="#8e8e8e" stroke-width="0.45"/>
<path d="M18.26 16.34 l1.5 -0.95 l1.0 0.65 v1.7 l-1.5 0.95z" fill="#c2c2c2" stroke="#8e8e8e" stroke-width="0.45"/>
<path d="M21.47 14.30 l1.5 -0.95 l1.0 0.65 v1.7 l-1.5 0.95z" fill="#c2c2c2" stroke="#8e8e8e" stroke-width="0.45"/>
<path d="M24.68 12.27 l1.5 -0.95 l1.0 0.65 v1.7 l-1.5 0.95z" fill="#c2c2c2" stroke="#8e8e8e" stroke-width="0.45"/>
<path d="M27.89 10.25 l1.5 -0.95 l1.0 0.65 v1.7 l-1.5 0.95z" fill="#c2c2c2" stroke="#8e8e8e" stroke-width="0.45"/>
<path d="M31.10 8.21 l1.5 -0.95 l1.0 0.65 v1.7 l-1.5 0.95z" fill="#c2c2c2" stroke="#8e8e8e" stroke-width="0.45"/>
<path d="M36.14 6.88 l1.6 1 v1.8 l-1 0.55 l-1.5 -0.9z" fill="#c2c2c2" stroke="#8e8e8e" stroke-width="0.45"/>
<path d="M39.01 8.64 l1.6 1 v1.8 l-1 0.55 l-1.5 -0.9z" fill="#c2c2c2" stroke="#8e8e8e" stroke-width="0.45"/>
<path d="M41.89 10.41 l1.6 1 v1.8 l-1 0.55 l-1.5 -0.9z" fill="#c2c2c2" stroke="#8e8e8e" stroke-width="0.45"/>
<path d="M44.76 12.17 l1.6 1 v1.8 l-1 0.55 l-1.5 -0.9z" fill="#c2c2c2" stroke="#8e8e8e" stroke-width="0.45"/>
<path d="M47.64 13.93 l1.6 1 v1.8 l-1 0.55 l-1.5 -0.9z" fill="#c2c2c2" stroke="#8e8e8e" stroke-width="0.45"/>
<path d="M50.51 15.69 l1.6 1 v1.8 l-1 0.55 l-1.5 -0.9z" fill="#c2c2c2" stroke="#8e8e8e" stroke-width="0.45"/>
<path d="M53.39 17.46 l1.6 1 v1.8 l-1 0.55 l-1.5 -0.9z" fill="#c2c2c2" stroke="#8e8e8e" stroke-width="0.45"/>
<path d="M56.26 19.22 l1.6 1 v1.8 l-1 0.55 l-1.5 -0.9z" fill="#c2c2c2" stroke="#8e8e8e" stroke-width="0.45"/>
  <polygon points="2.3,28.5 25.4,43.75 25.4,47.4 2.3,32.1" fill="#343434"/>
  <polygon points="25.4,43.75 57.4,22.3 57.4,25.8 25.4,47.4" fill="#6a6a6a"/>
  <polygon points="2.3,28.5 34.4,8.2 57.4,22.3 25.4,43.75" fill="#5a5a5a"/>
  <polygon points="34.4,8.2 57.4,22.3 25.4,43.75 23.6,42.5 52.2,23.2 32.2,10.9 33,9" fill="#787878"/>
  <polygon points="2.3,28.5 34.4,8.2 36,9.2 4,29.6" fill="#6c6c6c"/>
  <text transform="translate(11.6 32.4) rotate(-33)" font-family="Liberation Sans, sans-serif" font-size="4.4" fill="#bdbdbd" letter-spacing="0.1">MCU</text>
</symbol>
<symbol id="i-user" viewBox="0 0 60 60">
  <path d="M3.9 51.2 Q5.2 41.8 12.5 39.4 L22.4 37.6 H37.6 L47.5 39.4 Q54.8 41.8 56.2 51.2 Q56.3 53.9 53.2 53.9 H6.9 Q3.8 53.9 3.9 51.2Z" fill="url(#bodyg)"/>
  <path d="M22.3 33 H37.9 V38.6 Q36 43 30.2 43 Q24.4 43 22.3 38.6Z" fill="#fccf90"/>
  <path d="M22.3 36.2 Q30 40.4 37.9 36.2 V35 H22.3Z" fill="#e8a85a" opacity="0.55"/>
  <ellipse cx="29.7" cy="23.4" rx="10.4" ry="13.2" fill="url(#faceg)"/>
  <path d="M19.2 21.6 Q17.2 12.6 22.4 8.8 Q29.5 4.8 37 8.6 Q42.6 12.6 40.4 21.2 Q40 16.6 37.6 15.4 Q32.6 17.6 27.6 11.6 Q21.6 13.6 19.2 21.6Z" fill="#a26d10"/>
</symbol>
<symbol id="i-build" viewBox="0 0 40 40"><g transform="scale(1)" fill="#2b2b8c">
  <path d="M0.6 6.5 C2.4 3.8 5.8 2.5 10.5 2.55 C14 2.6 17.5 3.3 19.6 3.9 L22.3 3.9 L22.5 8.1 L20.3 8.2 C18.5 7.2 16 7.0 13.9 7.4 L13.9 9.0 L9.3 9.0 L9.2 6.2 C6.5 4.6 3.2 5.0 0.7 6.6Z"/>
  <path d="M9.3 8.6 H13.7 L13.9 19.5 H9.4Z"/>
  <path d="M10.7 9.8 H11.7 V18.8 H10.7Z" fill="#f4f4fb"/>
  <path d="M8.4 19.4 Q11.5 18.6 14.8 19.4 L15.0 21.4 Q15.7 24 15.2 27.5 Q14.7 31 15.3 36.6 Q12 38.3 7.4 36.9 Q8.2 32 7.4 28.5 Q6.7 24.5 8.2 21.3Z"/>
  <path d="M9.7 22.2 Q8.8 25 9.5 28.6 Q10.2 32 9.6 35.7 Q10.7 36.2 11.4 35.9 Q10.8 31.5 11.2 28 Q11.6 24.5 11.1 21.9Z" fill="#f4f4fb"/>
  <path d="M8.5 20.6 Q11.6 19.9 14.9 20.6" stroke="#f4f4fb" stroke-width="0.55" fill="none"/>
</g><text x="17.4" y="12.70" font-family="Liberation Mono, monospace" font-size="3.7" fill="#505050" letter-spacing="0.3">10101000</text>
<text x="17.4" y="16.60" font-family="Liberation Mono, monospace" font-size="3.7" fill="#505050" letter-spacing="0.3">10100001</text>
<text x="17.4" y="20.50" font-family="Liberation Mono, monospace" font-size="3.7" fill="#505050" letter-spacing="0.3">01011010</text>
<text x="17.4" y="24.40" font-family="Liberation Mono, monospace" font-size="3.7" fill="#505050" letter-spacing="0.3">00101001</text>
<text x="17.4" y="28.30" font-family="Liberation Mono, monospace" font-size="3.7" fill="#505050" letter-spacing="0.3">01000111</text><text x="17.0" y="36.6" font-family="Liberation Sans, sans-serif" font-weight="bold" font-size="10.8" fill="#3592ff" stroke="#3592ff" stroke-width="0.45" textLength="21.8" lengthAdjust="spacingAndGlyphs">Build</text></symbol>
<symbol id="i-floppy" viewBox="0 0 40 40"><g transform="translate(0.25 0.90)"><polygon points="2.59,16.24 2.81,15.46 20.13,3.91 21.96,4.05 37.80,21.80 16.30,36.70" fill="#2c2c2c" /></g>
<polygon points="2.59,16.24 2.81,15.46 20.13,3.91 21.96,4.05 37.80,21.80 16.30,36.70" fill="#616161" />
<polygon points="4.83,14.11 7.69,12.21 12.60,18.94 9.61,20.97" fill="#353535" />
<polygon points="7.44,12.37 17.75,5.50 23.25,11.98 12.45,19.28" fill="#d2d2d2" stroke="#e6e6e6" stroke-width="0.30"/>
<polygon points="13.39,8.93 17.29,6.33 21.74,11.63 17.69,14.36" fill="#000" />
<polygon points="13.72,13.22 14.01,13.76 14.11,14.36 14.01,14.96 13.71,15.50 13.25,15.93 12.67,16.20 12.03,16.29 11.39,16.18 10.83,15.90 10.38,15.46 10.11,14.91 10.02,14.32 10.13,13.73 10.43,13.20 10.88,12.78 11.45,12.51 12.08,12.42 12.70,12.52 13.27,12.79" fill="#000" />
<polygon points="11.99,23.52 26.09,13.94 32.98,21.98 18.11,32.24" fill="#fdfeff" />
<polygon points="11.99,23.52 26.09,13.94 28.34,16.57 13.99,26.37" fill="#4cb7ff" />
<line x1="14.94" y1="26.86" x2="28.55" y2="17.56" stroke="#7ccaff" stroke-width="0.5"/>
<line x1="15.56" y1="27.73" x2="29.23" y2="18.36" stroke="#7ccaff" stroke-width="0.5"/>
<line x1="16.18" y1="28.61" x2="29.93" y2="19.17" stroke="#7ccaff" stroke-width="0.5"/>
<line x1="16.80" y1="29.49" x2="30.63" y2="20.00" stroke="#7ccaff" stroke-width="0.5"/>
<line x1="17.44" y1="30.39" x2="31.33" y2="20.83" stroke="#7ccaff" stroke-width="0.5"/>
<line x1="18.08" y1="31.30" x2="32.05" y2="21.67" stroke="#7ccaff" stroke-width="0.5"/>
<polygon points="16.51,33.48 16.60,33.67 16.63,33.89 16.59,34.10 16.48,34.29 16.32,34.44 16.13,34.53 15.91,34.56 15.70,34.53 15.51,34.42 15.37,34.27 15.28,34.07 15.25,33.86 15.30,33.65 15.40,33.46 15.56,33.31 15.75,33.22 15.97,33.19 16.18,33.23 16.36,33.33" fill="#e4eef4" />
<polygon points="35.38,20.59 35.49,20.76 35.54,20.96 35.51,21.16 35.42,21.34 35.27,21.48 35.08,21.57 34.86,21.61 34.64,21.58 34.44,21.49 34.28,21.35 34.17,21.18 34.12,20.98 34.15,20.78 34.24,20.61 34.39,20.46 34.58,20.37 34.79,20.34 35.01,20.36 35.22,20.45" fill="#e4eef4" />
<polygon points="4.09,16.63 4.69,16.23 5.35,17.19 4.75,17.59" fill="#3a3a3a" /></symbol>
<symbol id="i-plus" viewBox="0 0 40 40">
  <path d="M15.3 4.5 H24.7 Q27.7 4.5 27.7 7.5 V12.4 H32.2 Q35.2 12.4 35.2 15.4 V24.2 Q35.2 27.2 32.2 27.2 H27.7 V31.7 Q27.7 34.7 24.7 34.7 H15.3 Q12.3 34.7 12.3 31.7 V27.2 H7.9 Q4.9 27.2 4.9 24.2 V15.4 Q4.9 12.4 7.9 12.4 H12.3 V7.5 Q12.3 4.5 15.3 4.5Z" fill="#fff" stroke="#2b86c9" stroke-width="1.5"/>
  <path d="M16.3 8.7 H23.8 V16.2 H31.2 V23.1 H23.8 V30.7 H16.3 V23.1 H8.9 V16.2 H16.3Z" fill="#60c1ff"/>
</symbol>
<symbol id="i-trash" viewBox="0 0 40 40">
  <ellipse cx="24" cy="31.5" rx="9" ry="2.6" fill="#000" opacity="0.10"/>
  <path d="M5.3 9.8 L7.4 31.2 Q17 35.8 26.8 31.2 L29.1 9.8Z" fill="url(#trashg)"/>
  <ellipse cx="17.2" cy="9.7" rx="11.9" ry="4.6" fill="#ececec"/>
  <ellipse cx="17.2" cy="9.9" rx="10.6" ry="3.7" fill="url(#trashin)"/>
  <g fill="#5fd13c">
   <path d="M9.2 26.2 Q9.6 19.5 15.2 18.6 L14.6 16.6 L19.6 19.6 L16.2 23.6 L15.9 21.6 Q12 22 10.5 26.4Z"/>
   <path d="M22.9 22.6 Q22.3 29 16.6 29.9 L17.2 31.9 L12.2 28.9 L15.6 24.9 L15.9 26.9 Q19.8 26.5 21.4 22.2Z"/>
  </g>
</symbol>
<symbol id="i-dbarr" viewBox="0 0 40 40">
  <path d="M9.6 30.2 V35.6 A9.899999999999999 2.7 0 0 0 29.4 35.6 V30.2 Z" fill="url(#dbside)"/><ellipse cx="19.5" cy="30.2" rx="9.899999999999999" ry="2.7" fill="url(#dbtop)"/>
<path d="M9.6 24.799999999999997 V29.799999999999997 A9.899999999999999 2.7 0 0 0 29.4 29.799999999999997 V24.799999999999997 Z" fill="url(#dbside)"/><ellipse cx="19.5" cy="24.799999999999997" rx="9.899999999999999" ry="2.7" fill="url(#dbtop)"/>
<path d="M9.6 19.4 V24.4 A9.899999999999999 2.7 0 0 0 29.4 24.4 V19.4 Z" fill="url(#dbside)"/><ellipse cx="19.5" cy="19.4" rx="9.899999999999999" ry="2.7" fill="url(#dbtop)"/>
  <g fill="none" stroke-linecap="butt">
   <path d="M17.0 20.0 V9.5 Q17.0 3.6 11.2 3.6 Q5.6 3.6 5.6 8.6" stroke="#2f86f5" stroke-width="4.2"/>
   <path d="M23.2 20.0 V9.5 Q23.2 3.6 29.0 3.6 Q34.6 3.6 34.6 8.6" stroke="#2f86f5" stroke-width="4.2"/>
   <path d="M17.0 20.0 V9.5 Q17.0 3.6 11.2 3.6 Q5.6 3.6 5.6 8.6" stroke="url(#arrg)" stroke-width="2.4"/>
   <path d="M23.2 20.0 V9.5 Q23.2 3.6 29.0 3.6 Q34.6 3.6 34.6 8.6" stroke="url(#arrg)" stroke-width="2.4"/>
  </g>
  <path d="M0.9 8.0 H10.1 L5.4 15.2Z" fill="#6ab6ff" stroke="#2f86f5" stroke-width="0.9" stroke-linejoin="round"/>
  <path d="M30.0 8.0 H39.2 L34.7 15.2Z" fill="#6ab6ff" stroke="#2f86f5" stroke-width="0.9" stroke-linejoin="round"/>
</symbol>
<symbol id="i-buildall" viewBox="0 0 60 60"><g transform="scale(1.5)" fill="#2b2b8c">
  <path d="M0.6 6.5 C2.4 3.8 5.8 2.5 10.5 2.55 C14 2.6 17.5 3.3 19.6 3.9 L22.3 3.9 L22.5 8.1 L20.3 8.2 C18.5 7.2 16 7.0 13.9 7.4 L13.9 9.0 L9.3 9.0 L9.2 6.2 C6.5 4.6 3.2 5.0 0.7 6.6Z"/>
  <path d="M9.3 8.6 H13.7 L13.9 19.5 H9.4Z"/>
  <path d="M10.7 9.8 H11.7 V18.8 H10.7Z" fill="#f4f4fb"/>
  <path d="M8.4 19.4 Q11.5 18.6 14.8 19.4 L15.0 21.4 Q15.7 24 15.2 27.5 Q14.7 31 15.3 36.6 Q12 38.3 7.4 36.9 Q8.2 32 7.4 28.5 Q6.7 24.5 8.2 21.3Z"/>
  <path d="M9.7 22.2 Q8.8 25 9.5 28.6 Q10.2 32 9.6 35.7 Q10.7 36.2 11.4 35.9 Q10.8 31.5 11.2 28 Q11.6 24.5 11.1 21.9Z" fill="#f4f4fb"/>
  <path d="M8.5 20.6 Q11.6 19.9 14.9 20.6" stroke="#f4f4fb" stroke-width="0.55" fill="none"/>
</g><text x="25.2" y="17.80" font-family="Liberation Mono, monospace" font-size="5.2" fill="#444" letter-spacing="0.55">10101000</text>
<text x="25.2" y="23.65" font-family="Liberation Mono, monospace" font-size="5.2" fill="#444" letter-spacing="0.55">10100001</text>
<text x="25.2" y="29.50" font-family="Liberation Mono, monospace" font-size="5.2" fill="#444" letter-spacing="0.55">01011010</text>
<text x="25.2" y="35.35" font-family="Liberation Mono, monospace" font-size="5.2" fill="#444" letter-spacing="0.55">00101001</text>
<text x="25.2" y="41.20" font-family="Liberation Mono, monospace" font-size="5.2" fill="#444" letter-spacing="0.55">01000111</text><text x="25.2" y="36.2" font-family="Liberation Sans, sans-serif" font-weight="bold" font-size="16" fill="#3592ff" stroke="#3592ff" stroke-width="0.7" textLength="32.4" lengthAdjust="spacingAndGlyphs">Build</text><text x="26" y="55.2" font-family="Liberation Sans, sans-serif" font-weight="bold" font-style="italic" font-size="19.8" fill="#3592ff" stroke="#3592ff" stroke-width="1.1" textLength="32.4" lengthAdjust="spacingAndGlyphs">ALL</text></symbol>
<symbol id="i-savebin" viewBox="0 0 60 60"><text x="4.2" y="7.20" font-family="Liberation Mono, monospace" font-size="5.6" fill="#333" letter-spacing="0.72">10101000</text>
<text x="4.2" y="13.55" font-family="Liberation Mono, monospace" font-size="5.6" fill="#333" letter-spacing="0.72">10100001</text>
<text x="4.2" y="19.90" font-family="Liberation Mono, monospace" font-size="5.6" fill="#333" letter-spacing="0.72">01011010</text>
<text x="4.2" y="26.25" font-family="Liberation Mono, monospace" font-size="5.6" fill="#333" letter-spacing="0.72">00101001</text>
<text x="4.2" y="32.60" font-family="Liberation Mono, monospace" font-size="5.6" fill="#333" letter-spacing="0.72">01000111</text><g transform="translate(0.34 1.22)"><polygon points="10.29,29.79 10.60,28.75 34.26,13.43 36.71,13.63 58.00,37.40 28.80,57.60" fill="#2c2c2c" /></g>
<polygon points="10.29,29.79 10.60,28.75 34.26,13.43 36.71,13.63 58.00,37.40 28.80,57.60" fill="#616161" />
<polygon points="13.39,26.94 17.32,24.40 23.93,33.48 19.82,36.20" fill="#353535" />
<polygon points="16.98,24.62 31.03,15.52 38.42,24.20 23.72,33.93" fill="#d2d2d2" stroke="#e6e6e6" stroke-width="0.41"/>
<polygon points="25.10,20.05 30.40,16.62 36.38,23.72 30.88,27.35" fill="#000" />
<polygon points="25.51,25.79 25.90,26.52 26.03,27.32 25.88,28.13 25.47,28.86 24.84,29.43 24.05,29.80 23.18,29.91 22.31,29.76 21.54,29.37 20.94,28.78 20.57,28.05 20.46,27.24 20.63,26.45 21.04,25.74 21.66,25.19 22.43,24.83 23.29,24.72 24.13,24.85 24.90,25.22" fill="#000" />
<polygon points="23.04,39.66 42.24,26.84 51.51,37.63 31.31,51.51" fill="#fdfeff" />
<polygon points="23.04,39.66 42.24,26.84 45.27,30.36 25.74,43.53" fill="#4cb7ff" />
<line x1="27.04" y1="44.19" x2="45.55" y2="31.69" stroke="#7ccaff" stroke-width="0.675"/>
<line x1="27.86" y1="45.37" x2="46.47" y2="32.76" stroke="#7ccaff" stroke-width="0.675"/>
<line x1="28.70" y1="46.56" x2="47.40" y2="33.86" stroke="#7ccaff" stroke-width="0.675"/>
<line x1="29.55" y1="47.77" x2="48.34" y2="34.96" stroke="#7ccaff" stroke-width="0.675"/>
<line x1="30.41" y1="48.99" x2="49.30" y2="36.08" stroke="#7ccaff" stroke-width="0.675"/>
<line x1="31.28" y1="50.23" x2="50.27" y2="37.21" stroke="#7ccaff" stroke-width="0.675"/>
<polygon points="29.12,53.20 29.24,53.46 29.27,53.75 29.21,54.04 29.07,54.30 28.85,54.51 28.58,54.64 28.29,54.68 28.00,54.63 27.74,54.49 27.55,54.28 27.42,54.01 27.39,53.72 27.45,53.44 27.60,53.18 27.81,52.97 28.08,52.85 28.37,52.80 28.66,52.85 28.92,52.99" fill="#e4eef4" />
<polygon points="54.75,35.77 54.89,36.00 54.96,36.27 54.93,36.53 54.81,36.77 54.60,36.96 54.35,37.09 54.05,37.13 53.75,37.09 53.48,36.98 53.26,36.79 53.11,36.55 53.05,36.29 53.08,36.03 53.21,35.79 53.41,35.60 53.66,35.48 53.96,35.43 54.25,35.47 54.52,35.58" fill="#e4eef4" />
<polygon points="12.33,30.32 13.16,29.79 14.05,31.09 13.22,31.63" fill="#3a3a3a" /></symbol>
<symbol id="i-arrbin" viewBox="0 0 60 60"><text x="6.0" y="20.00" font-family="Liberation Mono, monospace" font-size="5.4" fill="#3c3c3c" letter-spacing="0.6">10101000</text>
<text x="6.0" y="26.45" font-family="Liberation Mono, monospace" font-size="5.4" fill="#3c3c3c" letter-spacing="0.6">10100001</text>
<text x="6.0" y="32.90" font-family="Liberation Mono, monospace" font-size="5.4" fill="#3c3c3c" letter-spacing="0.6">01011010</text>
<text x="6.0" y="39.35" font-family="Liberation Mono, monospace" font-size="5.4" fill="#3c3c3c" letter-spacing="0.6">00101001</text>
<text x="6.0" y="45.80" font-family="Liberation Mono, monospace" font-size="5.4" fill="#3c3c3c" letter-spacing="0.6">01000111</text>
  <ellipse cx="33" cy="45.5" rx="17" ry="5" fill="url(#shadowg)"/>
  <path d="M11.2 30.2 Q17.5 46.5 31 45.6 Q41.5 44.5 49 33.6 L55.8 36.6 L50.8 17.6 L34.4 22.4 L40.6 26.4 Q34 37.6 24 37.2 Q15.5 36.6 11.2 30.2Z" fill="url(#bigarr)" stroke="#3c78c0" stroke-width="0.7" stroke-linejoin="round"/>
  <path d="M36.6 23 L50 19 L52.6 29 Q46 27.6 40.6 26.4Z" fill="#c2d8f2" opacity="0.65"/>
</symbol>
<symbol id="i-floppybig" viewBox="0 0 60 60"><g transform="translate(0.38 1.35)"><polygon points="3.56,24.86 3.87,23.69 30.35,6.19 33.17,6.42 56.90,33.20 24.60,54.70" fill="#2c2c2c" /></g>
<polygon points="3.56,24.86 3.87,23.69 30.35,6.19 33.17,6.42 56.90,33.20 24.60,54.70" fill="#616161" />
<polygon points="6.93,21.67 11.27,18.80 18.89,28.93 14.38,31.92" fill="#353535" />
<polygon points="10.88,19.06 26.67,8.63 35.10,18.54 18.67,29.42" fill="#d2d2d2" stroke="#e6e6e6" stroke-width="0.45"/>
<polygon points="19.97,13.85 25.96,9.90 32.79,18.00 26.60,22.10" fill="#000" />
<polygon points="20.52,20.36 20.97,21.17 21.13,22.08 20.98,22.98 20.54,23.79 19.84,24.44 18.96,24.84 17.98,24.97 17.01,24.81 16.14,24.37 15.45,23.72 15.02,22.90 14.88,22.00 15.04,21.11 15.49,20.31 16.18,19.68 17.04,19.29 18.00,19.15 18.96,19.30 19.83,19.72" fill="#000" />
<polygon points="18.02,35.68 39.40,21.50 49.65,33.45 27.27,48.34" fill="#fdfeff" />
<polygon points="18.02,35.68 39.40,21.50 42.78,25.44 21.07,39.85" fill="#4cb7ff" />
<line x1="22.51" y1="40.57" x2="43.08" y2="26.91" stroke="#7ccaff" stroke-width="0.75"/>
<line x1="23.44" y1="41.83" x2="44.10" y2="28.11" stroke="#7ccaff" stroke-width="0.75"/>
<line x1="24.37" y1="43.10" x2="45.12" y2="29.31" stroke="#7ccaff" stroke-width="0.75"/>
<line x1="25.31" y1="44.39" x2="46.16" y2="30.53" stroke="#7ccaff" stroke-width="0.75"/>
<line x1="26.26" y1="45.68" x2="47.21" y2="31.76" stroke="#7ccaff" stroke-width="0.75"/>
<line x1="27.23" y1="46.99" x2="48.27" y2="33.00" stroke="#7ccaff" stroke-width="0.75"/>
<polygon points="24.90,50.11 25.03,50.39 25.07,50.69 25.01,51.00 24.86,51.27 24.62,51.48 24.33,51.62 24.01,51.66 23.70,51.61 23.42,51.46 23.20,51.24 23.07,50.97 23.03,50.66 23.09,50.36 23.24,50.09 23.48,49.88 23.77,49.74 24.08,49.70 24.40,49.75 24.68,49.89" fill="#e4eef4" />
<polygon points="53.31,31.41 53.47,31.67 53.53,31.96 53.49,32.25 53.35,32.51 53.12,32.72 52.83,32.86 52.50,32.91 52.17,32.87 51.86,32.74 51.62,32.53 51.46,32.28 51.40,31.99 51.44,31.70 51.59,31.44 51.81,31.23 52.11,31.09 52.43,31.04 52.76,31.08 53.06,31.21" fill="#e4eef4" />
<polygon points="5.86,25.44 6.76,24.85 7.80,26.29 6.89,26.89" fill="#3a3a3a" /></symbol></svg>
<div class="sb" style="top:0"></div>
<svg class="ic" style="left:0px;top:0px" width="60" height="60"><use href="#i-gears"/></svg>
<div class="tb" style="left:60px"></div>
<svg class="ic" style="left:60px;top:0px" width="60" height="60"><use href="#i-sys"/></svg>
<div class="tb" style="left:120px"></div>
<svg class="ic" style="left:120px;top:0px" width="60" height="60"><use href="#i-plccfg"/></svg>
<div class="tb" style="left:180px"></div>
<svg class="ic" style="left:180px;top:0px" width="60" height="60"><use href="#i-text"/></svg>
<div class="tb" style="left:240px"></div>
<svg class="ic" style="left:240px;top:0px" width="60" height="60"><use href="#i-sum"/></svg>
<div class="tb" style="left:300px"></div>
<svg class="ic" style="left:300px;top:0px" width="60" height="60"><use href="#i-info"/></svg>
<div class="tb" style="left:360px"></div>
<svg class="ic" style="left:360px;top:0px" width="60" height="60"><use href="#i-db"/></svg>
<div class="tb sel-v" style="left:420px"></div>
<svg class="ic" style="left:420px;top:0px" width="60" height="60"><use href="#i-cfg"/></svg>
<div class="tb" style="left:480px"></div>
<svg class="ic" style="left:480px;top:0px" width="60" height="60"><use href="#i-support"/></svg>
<div class="sb" style="top:60px"></div>
<svg class="ic" style="left:0px;top:60px" width="60" height="60"><use href="#i-note"/></svg>
<div class="sb" style="top:120px"></div>
<svg class="ic" style="left:0px;top:120px" width="60" height="60"><use href="#i-books"/></svg>
<div class="sb" style="top:180px"></div>
<svg class="ic" style="left:0px;top:180px" width="60" height="60"><use href="#i-toolbars"/></svg>
<div class="sb" style="top:240px"></div>
<svg class="ic" style="left:0px;top:240px" width="60" height="60"><use href="#i-mycnc"/></svg>
<div class="sb sel-h" style="top:300px"></div>
<svg class="ic" style="left:0px;top:300px" width="60" height="60"><use href="#i-tools"/></svg>
<div class="sb" style="top:360px"></div>
<svg class="ic" style="left:0px;top:360px" width="60" height="60"><use href="#i-chip"/></svg>
<div class="sb" style="top:420px"></div>
<svg class="ic" style="left:0px;top:420px" width="60" height="60"><use href="#i-user"/></svg>
<div class="pane" style="left:60px;top:85px;width:964px;height:622px"></div>
<div class="tab" style="left:60px;top:62px;width:94px;height:24px;border-bottom:1px solid #b9b9b9"></div>
<div class="t " style="left:71.50px;top:66px;font-size:13px;line-height:17px;letter-spacing:-0.120px;">Preferences</div>
<div class="tab" style="left:153px;top:62px;width:62px;height:24px;border-bottom:1px solid #b9b9b9"></div>
<div class="t " style="left:164.25px;top:66px;font-size:13px;line-height:17px;letter-spacing:0.117px;">Profile</div>
<div class="tab" style="left:214px;top:62px;width:69px;height:24px;border-bottom:1px solid #b9b9b9"></div>
<div class="t " style="left:225.50px;top:66px;font-size:13px;line-height:17px;letter-spacing:0.160px;">Macros</div>
<div class="tab" style="left:371px;top:62px;width:101px;height:24px;border-bottom:1px solid #b9b9b9"></div>
<div class="t " style="left:383.25px;top:66px;font-size:13px;line-height:17px;letter-spacing:0.245px;">Axes/Motors</div>
<div class="tab" style="left:470px;top:62px;width:117px;height:24px;border-bottom:1px solid #b9b9b9"></div>
<div class="t " style="left:481.50px;top:66px;font-size:13.5px;line-height:17px;letter-spacing:0.087px;">Inputs/Sensors</div>
<div class="tab" style="left:585px;top:62px;width:95px;height:24px;border-bottom:1px solid #b9b9b9"></div>
<div class="t " style="left:597.45px;top:66px;font-size:13px;line-height:17px;letter-spacing:0.167px;">Technology</div>
<div class="tab" style="left:678px;top:62px;width:76px;height:24px;border-bottom:1px solid #b9b9b9"></div>
<div class="t " style="left:689.75px;top:66px;font-size:13px;line-height:17px;letter-spacing:0.258px;">Network</div>
<div class="tab" style="left:752px;top:62px;width:71px;height:24px;border-bottom:1px solid #b9b9b9"></div>
<div class="t " style="left:763.93px;top:67px;font-size:12.25px;line-height:16px;letter-spacing:-0.013px;">Camera</div>
<div class="tab" style="left:821px;top:62px;width:96px;height:24px;border-bottom:1px solid #b9b9b9"></div>
<div class="t " style="left:832.79px;top:67px;font-size:12.0px;line-height:16px;letter-spacing:-0.206px;">5 axes RTCP</div>
<div class="tab" style="left:915px;top:62px;width:80px;height:24px;border-bottom:1px solid #b9b9b9"></div>
<div class="t " style="left:927.30px;top:66px;font-size:13px;line-height:17px;letter-spacing:-0.017px;">Gamepad</div>
<div class="tabsel" style="left:281px;top:60px;width:91px;height:26px"></div>
<div class="t " style="left:292.31px;top:66px;font-size:12.25px;line-height:16px;letter-spacing:0.033px;">PLC Builder</div>
<div style="left:992px;top:60px;width:32px;height:26px;background:#eff0f1"></div>
<div style="left:993px;top:60px;width:15px;height:27px;border:1px solid #bdbdbd;border-radius:3px;background:linear-gradient(#fcfcfc,#f2f2f2)"></div>
<div style="left:1008px;top:60px;width:15px;height:27px;border:1px solid #bdbdbd;border-radius:3px;background:linear-gradient(#fcfcfc,#f2f2f2)"></div>
<svg style="left:993px;top:60px" width="30" height="27"><polygon points="9.4,8.4 9.4,18.0 3.8,13.2" fill="#b0b2b4"/><polygon points="19.8,8.4 19.8,18.0 25.4,13.2" fill="#54585c"/></svg>
<div class="pane" style="left:62px;top:112px;width:960px;height:593px"></div>
<div class="tab" style="left:168px;top:89px;width:156px;height:24px;border-bottom:1px solid #b9b9b9"></div>
<div class="t " style="left:179.25px;top:93px;font-size:13px;line-height:17px;letter-spacing:-0.045px;">Hardware XML configs</div>
<div class="tab" style="left:322px;top:89px;width:102px;height:24px;border-bottom:1px solid #b9b9b9"></div>
<div class="t " style="left:333.93px;top:94px;font-size:12.25px;line-height:16px;letter-spacing:-0.003px;">Software PLC</div>
<div class="tab" style="left:422px;top:89px;width:130px;height:24px;border-bottom:1px solid #b9b9b9"></div>
<div class="t " style="left:433.50px;top:93px;font-size:13px;line-height:17px;letter-spacing:-0.103px;">PLC Configuration</div>
<div class="tabsel" style="left:62px;top:87px;width:107px;height:26px"></div>
<div class="t " style="left:73.00px;top:92px;font-size:13px;line-height:17px;letter-spacing:-0.232px;">Hardware PLC</div>
<div class="t " style="left:72.83px;top:123px;font-size:12.0px;line-height:16px;letter-spacing:-0.107px;">PLC Sources</div>
<div class="t " style="left:72.50px;top:498px;font-size:13px;line-height:17px;letter-spacing:-0.291px;">PLC Includes</div>
<div class="t " style="left:368.00px;top:126px;font-size:13px;line-height:17px;letter-spacing:-0.175px;">Name:</div>
<div class="t " style="left:410.50px;top:126px;font-size:13px;line-height:17px;letter-spacing:0.275px;">M71</div>
<div class="t " style="left:577.75px;top:127px;font-size:12.25px;line-height:16px;letter-spacing:-0.013px;">Aliases:</div>
<div style="left:626px;top:123px;width:319px;height:23px;background:#fcfcfc;border:1px solid #b9b9b9;border-radius:3px"></div>
<div class="t " style="left:629.29px;top:127px;font-size:12.5px;line-height:16px;letter-spacing:-0.017px;">M03;M20;C07</div>
<div class="box" style="left:73px;top:144px;width:243px;height:349px"></div>
<div style="left:74px;top:355px;width:227px;height:15px;background:#3daee9"></div>
<div class="t " style="left:77.00px;top:145px;font-size:12.0px;line-height:16px;transform:scaleX(0.9064);transform-origin:0 0;">CLR</div>
<div class="t " style="left:76.69px;top:160px;font-size:12.0px;line-height:16px;transform:scaleX(0.8757);transform-origin:0 0;">EST</div>
<div class="t " style="left:76.50px;top:174px;font-size:13px;line-height:17px;letter-spacing:0.050px;">M00</div>
<div class="t " style="left:76.50px;top:189px;font-size:13px;line-height:17px;letter-spacing:-0.250px;">M01</div>
<div class="t " style="left:76.56px;top:205px;font-size:12.25px;line-height:16px;letter-spacing:-0.010px;">M02 (M05;M21;M74;OFF;C08)</div>
<div class="t " style="left:76.50px;top:219px;font-size:13px;line-height:17px;letter-spacing:-0.033px;">M101</div>
<div class="t " style="left:76.50px;top:234px;font-size:13px;line-height:17px;letter-spacing:-0.033px;">M102</div>
<div class="t " style="left:76.50px;top:249px;font-size:13px;line-height:17px;letter-spacing:-0.067px;">M140</div>
<div class="t " style="left:76.50px;top:264px;font-size:13px;line-height:17px;letter-spacing:-0.033px;">M141</div>
<div class="t " style="left:76.50px;top:279px;font-size:13px;line-height:17px;letter-spacing:-0.033px;">M142</div>
<div class="t " style="left:76.50px;top:294px;font-size:13px;line-height:17px;letter-spacing:0.000px;">M62</div>
<div class="t " style="left:76.50px;top:309px;font-size:13px;line-height:17px;letter-spacing:-0.050px;">M63</div>
<div class="t " style="left:76.50px;top:324px;font-size:13px;line-height:17px;letter-spacing:-0.150px;">M64</div>
<div class="t " style="left:76.50px;top:339px;font-size:13px;line-height:17px;letter-spacing:-0.050px;">M65</div>
<div class="t " style="left:76.50px;top:354px;font-size:13px;line-height:17px;letter-spacing:-0.291px;color:#fff;">M71 (M03;M20;C07)</div>
<div class="t " style="left:76.56px;top:370px;font-size:12.25px;line-height:16px;letter-spacing:0.010px;">M74 (M02;M05;M21;OFF;C08)</div>
<div class="t " style="left:76.50px;top:384px;font-size:13px;line-height:17px;letter-spacing:-0.050px;">M78</div>
<div class="t " style="left:76.50px;top:399px;font-size:13px;line-height:17px;letter-spacing:0.000px;">M79</div>
<div class="t " style="left:76.50px;top:414px;font-size:13px;line-height:17px;letter-spacing:0.000px;">M81</div>
<div class="t " style="left:76.50px;top:429px;font-size:13px;line-height:17px;letter-spacing:0.000px;">M82</div>
<div class="t " style="left:76.50px;top:444px;font-size:13px;line-height:17px;letter-spacing:0.000px;">M87</div>
<div class="t " style="left:76.50px;top:459px;font-size:13px;line-height:17px;letter-spacing:-0.050px;">M88</div>
<div class="t " style="left:76.50px;top:474px;font-size:13px;line-height:17px;letter-spacing:0.000px;">M89</div>
<div style="left:301px;top:145px;width:14px;height:347px;background:#e6e6e6;border-left:1px solid #b9b9b9"></div>
<div class="sbbtn" style="left:302px;top:145px;width:13px;height:14px;border-bottom:1px solid #b9b9b9"></div>
<div class="sbbtn" style="left:302px;top:478px;width:13px;height:14px;border-top:1px solid #b9b9b9"></div>
<div style="left:302px;top:158px;width:13px;height:273px;background:linear-gradient(to right,#fbfbfb,#f3f4f4);border-top:1px solid #b9b9b9;border-bottom:1px solid #b9b9b9;box-shadow:inset 0 0 0 1px #fff"></div>
<svg style="left:302px;top:145px" width="13" height="347"><polygon points="2.4,8.9 10.4,8.9 6.4,4.7" fill="#7a7e82"/><polygon points="2.4,337.6 10.4,337.6 6.4,341.8" fill="#7a7e82"/></svg>
<div class="box" style="left:73px;top:520px;width:243px;height:175px"></div>
<div class="t " style="left:76.80px;top:520px;font-size:13px;line-height:17px;letter-spacing:0.231px;">common.const.h</div>
<div class="t " style="left:77.09px;top:535px;font-size:13.5px;line-height:17px;letter-spacing:0.095px;">func.h</div>
<div class="t " style="left:77.10px;top:550px;font-size:13px;line-height:17px;letter-spacing:-0.022px;">func_ihc.h</div>
<div class="t " style="left:77.10px;top:565px;font-size:13px;line-height:17px;letter-spacing:-0.042px;">func_plasma.h</div>
<div class="t " style="left:76.47px;top:580px;font-size:13.5px;line-height:17px;letter-spacing:0.125px;">pins.h</div>
<div class="t " style="left:77.30px;top:595px;font-size:13px;line-height:17px;letter-spacing:-0.080px;">vars.h</div>
<div class="btn40" style="left:322px;top:144px"></div>
<svg class="ic" style="left:322px;top:144px" width="40" height="40"><use href="#i-build"/></svg>
<div class="btn40" style="left:322px;top:184px"></div>
<svg class="ic" style="left:322px;top:184px" width="40" height="40"><use href="#i-floppy"/></svg>
<div class="btn40" style="left:322px;top:224px"></div>
<svg class="ic" style="left:322px;top:224px" width="40" height="40"><use href="#i-plus"/></svg>
<div class="btn40" style="left:322px;top:264px"></div>
<svg class="ic" style="left:322px;top:264px" width="40" height="40"><use href="#i-trash"/></svg>
<div class="btn40" style="left:322px;top:453px"></div>
<svg class="ic" style="left:322px;top:453px" width="40" height="40"><use href="#i-dbarr"/></svg>
<div class="btn40" style="left:322px;top:520px"></div>
<svg class="ic" style="left:322px;top:520px" width="40" height="40"><use href="#i-floppy"/></svg>
<div class="btn40" style="left:322px;top:560px"></div>
<svg class="ic" style="left:322px;top:560px" width="40" height="40"><use href="#i-plus"/></svg>
<div class="btn40" style="left:322px;top:600px"></div>
<svg class="ic" style="left:322px;top:600px" width="40" height="40"><use href="#i-trash"/></svg>
<div class="box" style="left:368px;top:152px;width:577px;height:358px"></div>
<div style="left:369px;top:153px;width:561px;height:342px;overflow:hidden">
<div class="t m" style="left:4.3px;top:8px;font-size:14px;line-height:16px;letter-spacing:-0.4px">//do_plasma_probe()</div>
<div class="t m" style="left:4.3px;top:23px;font-size:14px;line-height:16px;letter-spacing:-0.4px">//{</div>
<div class="t m" style="left:4.3px;top:38px;font-size:14px;line-height:16px;letter-spacing:-0.4px">gvarset(7080,ihc_move_down_speed);//seet speed;</div>
<div class="t m" style="left:4.3px;top:53px;font-size:14px;line-height:16px;letter-spacing:-0.4px">if (ihc_enabled!=0)</div>
<div class="t m" style="left:4.3px;top:68px;font-size:14px;line-height:16px;letter-spacing:-0.4px">{</div>
<div class="t m" style="left:4.3px;top:98px;font-size:14px;line-height:16px;letter-spacing:-0.4px">    sens=portget(INPUT_IHC);</div>
<div class="t m" style="left:4.3px;top:113px;font-size:14px;line-height:16px;letter-spacing:-0.4px">    if (sens!=0)</div>
<div class="t m" style="left:4.3px;top:128px;font-size:14px;line-height:16px;letter-spacing:-0.4px">    {</div>
<div class="t m" style="left:4.3px;top:143px;font-size:14px;line-height:16px;letter-spacing:-0.4px">    exit(plc_exit_probe_error);</div>
<div class="t m" style="left:4.3px;top:158px;font-size:14px;line-height:16px;letter-spacing:-0.4px">    };</div>
<div class="t m" style="left:4.3px;top:173px;font-size:14px;line-height:16px;letter-spacing:-0.4px">    portset(OUTPUT_TORQUE_LIMIT);</div>
<div class="t m" style="left:4.3px;top:188px;font-size:14px;line-height:16px;letter-spacing:-0.4px">    portset(OUTPUT_EPROBE);</div>
<div class="t m" style="left:4.3px;top:218px;font-size:14px;line-height:16px;letter-spacing:-0.4px">    texit=timer+200;</div>
<div class="t m" style="left:4.3px;top:233px;font-size:14px;line-height:16px;letter-spacing:-0.4px">    do{ timer++; }while (timer&lt;texit);</div>
<div class="t m" style="left:4.3px;top:263px;font-size:14px;line-height:16px;letter-spacing:-0.4px">    sens=portget(INPUT_IHC);</div>
<div class="t m" style="left:4.3px;top:278px;font-size:14px;line-height:16px;letter-spacing:-0.4px">    if (sens==0)</div>
<div class="t m" style="left:4.3px;top:293px;font-size:14px;line-height:16px;letter-spacing:-0.4px">    {</div>
<div class="t m" style="left:4.3px;top:308px;font-size:14px;line-height:16px;letter-spacing:-0.4px">    g0moveA(0x0,0x4,0-30000);//Z axis,</div>
<div class="t m" style="left:4.3px;top:323px;font-size:14px;line-height:16px;letter-spacing:-0.4px">    do { code=gvarget(6060); }while(code!=0);//wait till motion started</div>
<div class="t m" style="left:4.3px;top:339px;font-size:14px;line-height:16px;letter-spacing:-0.4px">    {</div>
</div>
<div style="left:930px;top:153px;width:14px;height:342px;background:#e6e6e6;border-left:1px solid #b9b9b9"></div>
<div class="sbbtn" style="left:931px;top:153px;width:13px;height:14px;border-bottom:1px solid #b9b9b9"></div>
<div class="sbbtn" style="left:931px;top:481px;width:13px;height:14px;border-top:1px solid #b9b9b9"></div>
<div style="left:931px;top:207px;width:13px;height:43px;background:linear-gradient(to right,#fbfbfb,#f3f4f4);border-top:1px solid #b9b9b9;border-bottom:1px solid #b9b9b9;box-shadow:inset 0 0 0 1px #fff"></div>
<svg style="left:931px;top:153px" width="13" height="342"><polygon points="2.4,8.9 10.4,8.9 6.4,4.7" fill="#7a7e82"/><polygon points="2.4,332.6 10.4,332.6 6.4,336.8" fill="#7a7e82"/></svg>
<div style="left:369px;top:495px;width:575px;height:14px;background:#e6e6e6;border-top:1px solid #b9b9b9"></div>
<div class="sbbtn" style="left:369px;top:496px;width:14px;height:13px;border-right:1px solid #b9b9b9"></div>
<div class="sbbtn" style="left:916px;top:496px;width:15px;height:13px;border-left:1px solid #b9b9b9;border-right:1px solid #b9b9b9"></div>
<div style="left:383px;top:496px;width:492px;height:13px;background:linear-gradient(#fdfdfd,#f3f3f3);border-right:1px solid #b9b9b9"></div>
<div style="left:931px;top:496px;width:13px;height:13px;background:#f1f1f1"></div>
<svg style="left:369px;top:496px" width="575" height="13"><polygon points="8.6,2.6 8.6,10.6 4.4,6.6" fill="#7a7e82"/><polygon points="552.6,2.6 552.6,10.6 556.8,6.6" fill="#7a7e82"/></svg>
<div class="box" style="left:368px;top:516px;width:577px;height:179px"></div>
<div class="btn60" style="left:951px;top:123px"></div>
<svg class="ic" style="left:951px;top:123px" width="60" height="60"><use href="#i-buildall"/></svg>
<div class="btn60" style="left:951px;top:183px"></div>
<svg class="ic" style="left:951px;top:183px" width="60" height="60"><use href="#i-savebin"/></svg>
<div class="btn60" style="left:951px;top:243px"></div>
<svg class="ic" style="left:951px;top:243px" width="60" height="60"><use href="#i-arrbin"/></svg>
<div style="left:964px;top:708px;width:60px;height:60px;border:1px solid #b6b6b6;background:#eff0f1"></div>
<svg class="ic" style="left:964px;top:708px" width="60" height="60"><use href="#i-floppybig"/></svg>
</div></body></html>
